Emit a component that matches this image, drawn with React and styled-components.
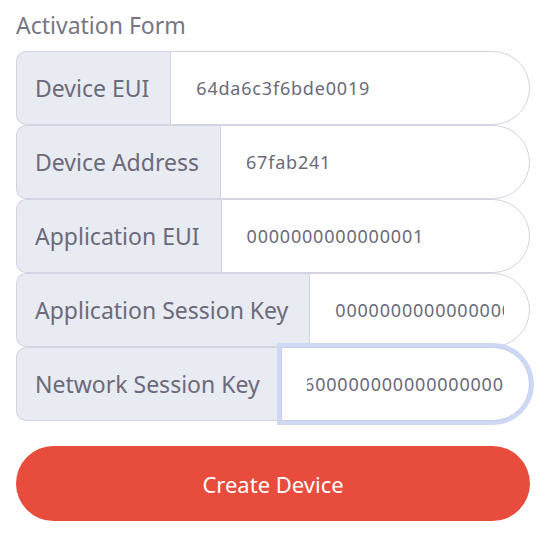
import React, { useEffect, useRef } from 'react';
import styled, { createGlobalStyle } from 'styled-components';

const Global = createGlobalStyle`
    body {
        margin: 0;
        background: #fff;
        font-family: "Noto Sans", "Open Sans", sans-serif;
    }
`;

const Form = styled.form`
    width: 514px;
    padding: 8px 0 0 16px;
`;

const Title = styled.h3`
    margin: 0 0 9px 0;
    font-size: 23px;
    font-weight: 400;
    color: #767684;
    line-height: 34px;
`;

const Group = styled.div`
    display: flex;
    height: 74px;
`;

const Label = styled.label`
    display: flex;
    align-items: center;
    padding: 0 21px 0 18px;
    background: #e9ebf3;
    border: 1px solid #d3d3e1;
    border-right: none;
    border-radius: 10px 0 0 10px;
    font-size: 23px;
    color: #6b6a7a;
    white-space: nowrap;
`;

const Input = styled.input`
    flex: 1;
    min-width: 0;
    box-sizing: border-box;
    height: 100%;
    padding: 0 25px;
    border: 1px solid #d3d3e1;
    border-radius: 0 37px 37px 0;
    font-family: "Noto Sans", "Open Sans", sans-serif;
    font-size: 18px;
    letter-spacing: 0.8px;
    color: #6b6a7a;
    background: #fff;
    outline: none;

    &:focus {
        border: 1px solid #c4cdee;
        box-shadow: 0 0 0 4px #cfd8f3;
    }
`;

const Button = styled.button`
    display: block;
    width: 514px;
    height: 75px;
    margin-top: 25px;
    border: none;
    border-radius: 38px;
    background: #e74c3c;
    color: #fff;
    font-family: "Noto Sans", "Open Sans", sans-serif;
    font-size: 22px;
`;

const fields = [
    { label: 'Device EUI', value: '64da6c3f6bde0019' },
    { label: 'Device Address', value: '67fab241' },
    { label: 'Application EUI', value: '0000000000000001' },
    { label: 'Application Session Key', value: '00000000000000000000000000000000' },
    { label: 'Network Session Key', value: '0000000000000000000000000000000000000000000006600000000000000000', focus: true },
];

const Field = ({ label, value, focus }) => {
    const ref = useRef(null);
    useEffect(() => {
        if (focus && ref.current) {
            const el = ref.current;
            el.focus();
            el.setSelectionRange(value.length, value.length);
            el.scrollLeft = el.scrollWidth;
        }
    }, [focus, value]);
    return (
        <Group>
            <Label>{label}</Label>
            <Input ref={ref} defaultValue={value} spellCheck={false} />
        </Group>
    );
};

const App = () => {
    return (
        <>
            <Global />
            <Form onSubmit={e => e.preventDefault()}>
                <Title>Activation Form</Title>
                {fields.map(f => <Field key={f.label} {...f} />)}
                <Button type="submit">Create Device</Button>
            </Form>
        </>
    );
};

export default App;
